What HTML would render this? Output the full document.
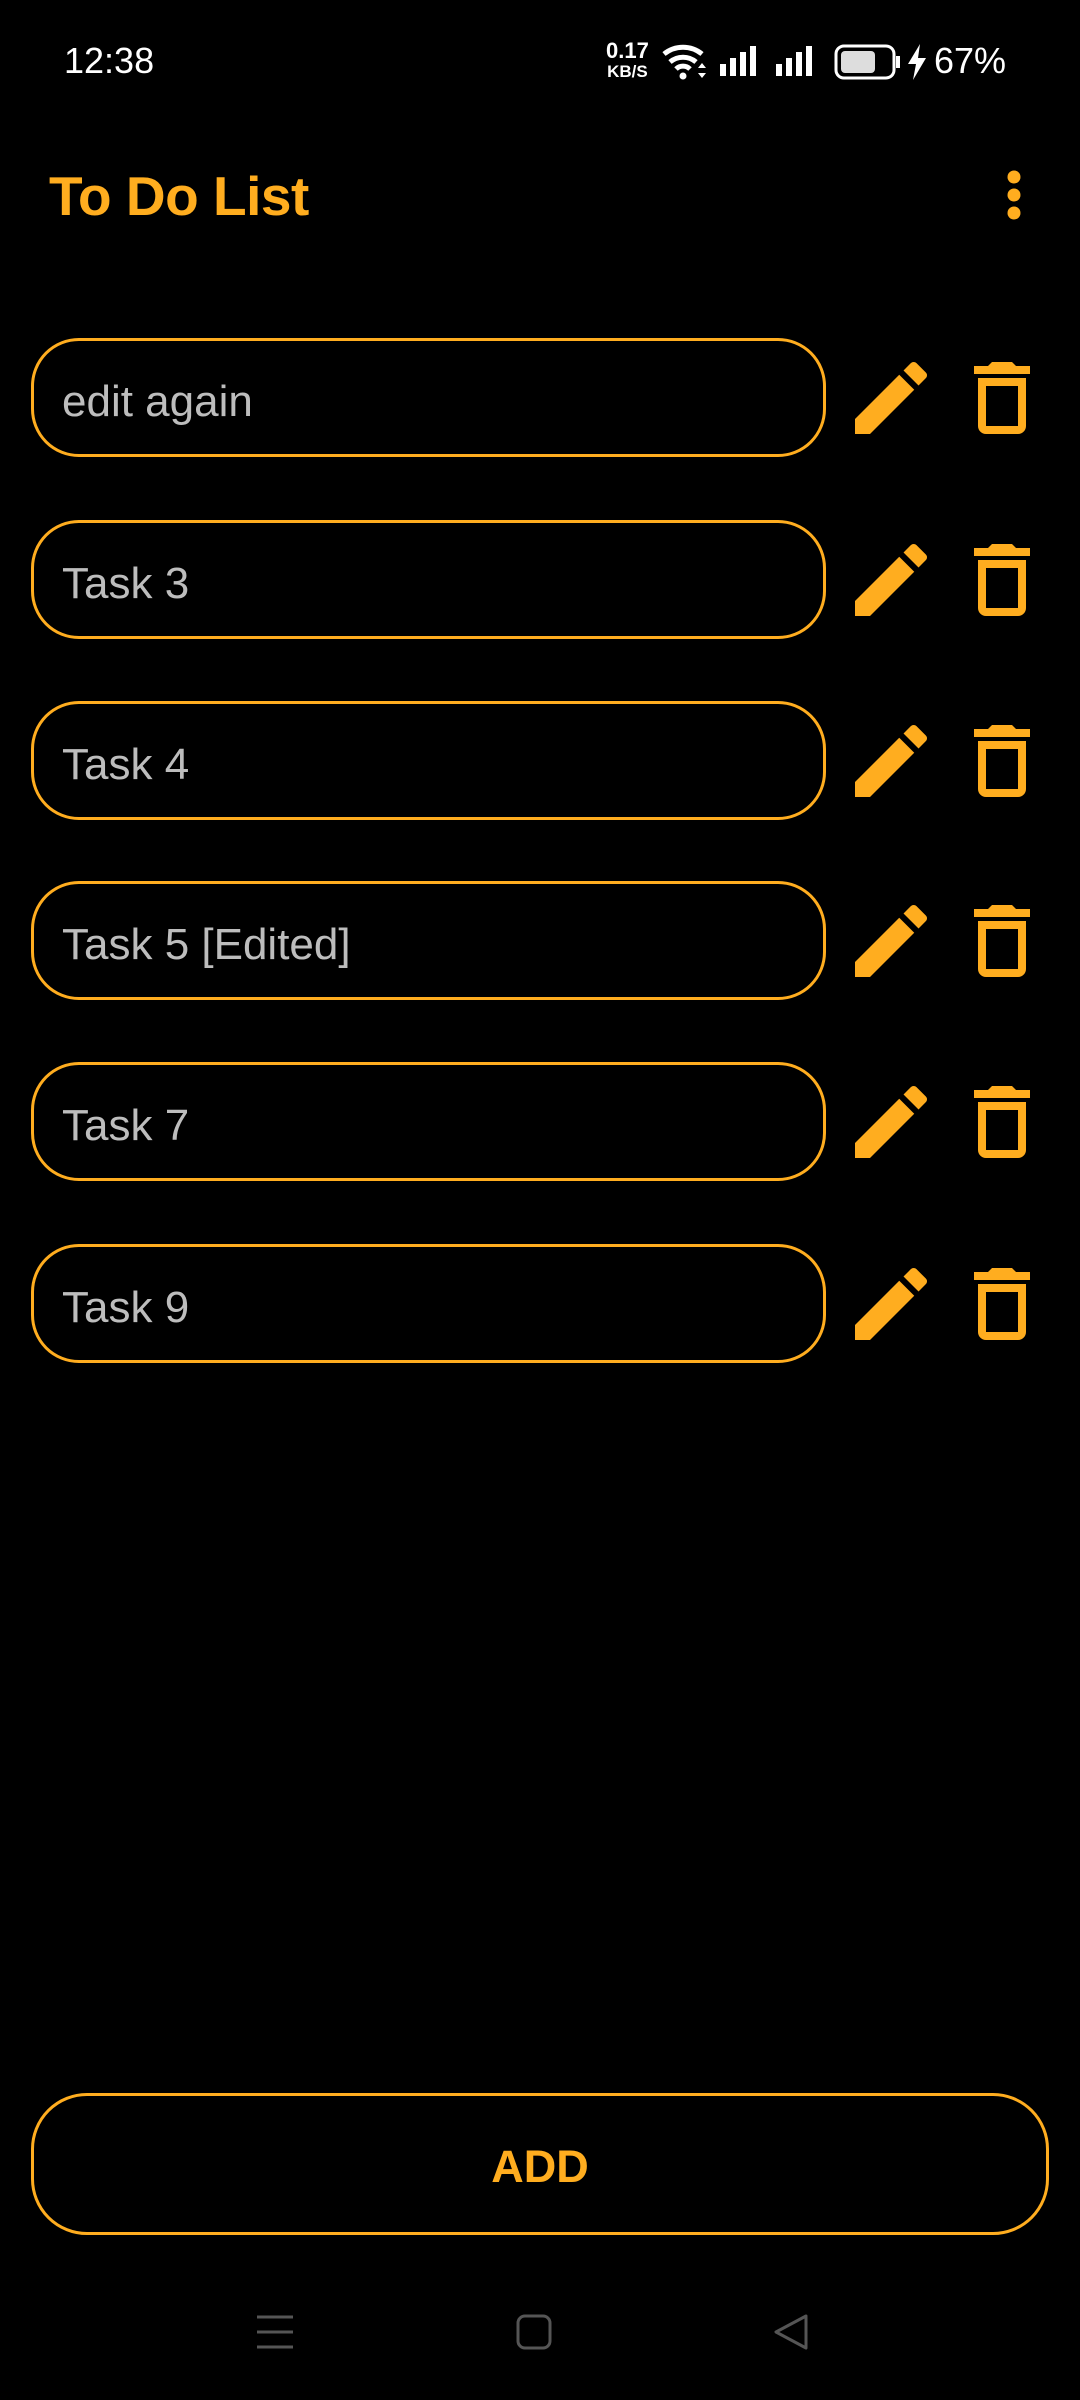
<!DOCTYPE html>
<html><head><meta charset="utf-8"><style>
*{margin:0;padding:0;box-sizing:border-box}
body{width:1080px;height:2400px;background:#000;position:relative;overflow:hidden;font-family:"Liberation Sans",Roboto,sans-serif}
.abs{position:absolute}
.row{position:absolute;left:31px;width:795px;height:119px;border:3px solid #FFAD1F;border-radius:48px}
.row span{position:absolute;left:28px;top:4px;line-height:113px;font-size:44px;color:#bdbdbd}
.ic{position:absolute;width:96px;height:96px}
</style></head><body>
<div class="abs" style="left:64px;top:40px;color:#fff;font-size:36px;">12:38</div>
<div class="abs" style="left:606px;top:41px;color:#fff;font-size:22px;font-weight:bold;line-height:19px;text-align:center;">0.17<br><span style="font-size:17px">KB/S</span></div>
<svg class="abs" style="left:660px;top:40px" width="50" height="42" viewBox="0 0 50 42"><path d="M4 14 A30 30 0 0 1 42 14" stroke="#fff" stroke-width="5" fill="none"/><path d="M10 22 A20 20 0 0 1 36 22" stroke="#fff" stroke-width="5" fill="none"/><path d="M16 29 A10 10 0 0 1 30 29" stroke="#fff" stroke-width="5" fill="none"/><circle cx="23" cy="36" r="3.5" fill="#fff"/><path d="M38 28l4-5 4 5zM38 33l4 5 4-5z" fill="#fff"/></svg>
<svg class="abs" style="left:718px;top:44px" width="110" height="34"><rect x="2" y="20" width="6" height="12" fill="#fff"/><rect x="12" y="14" width="6" height="18" fill="#fff"/><rect x="22" y="8" width="6" height="24" fill="#fff"/><rect x="32" y="2" width="6" height="30" fill="#fff"/><rect x="58" y="20" width="6" height="12" fill="#fff"/><rect x="68" y="14" width="6" height="18" fill="#fff"/><rect x="78" y="8" width="6" height="24" fill="#fff"/><rect x="88" y="2" width="6" height="30" fill="#fff"/></svg>
<svg class="abs" style="left:834px;top:44px" width="70" height="36"><rect x="2" y="2" width="58" height="32" rx="8" stroke="#fff" stroke-width="3" fill="none"/><rect x="7" y="7" width="34" height="22" rx="4" fill="#ddd"/><rect x="62" y="12" width="4" height="12" fill="#fff"/></svg>
<svg class="abs" style="left:906px;top:44px" width="22" height="36"><path d="M14 0L2 20h8l-3 16 13-22h-8z" fill="#fff"/></svg>
<div class="abs" style="left:934px;top:40px;color:#fff;font-size:36px;">67%</div>

<div class="abs" style="left:49px;top:164px;color:#FFAD1F;font-size:55px;font-weight:bold;letter-spacing:-0.5px;">To Do List</div>
<svg class="abs" style="left:1000px;top:168px" width="28" height="54"><circle cx="14" cy="9" r="6.5" fill="#FFAD1F"/><circle cx="14" cy="27" r="6.5" fill="#FFAD1F"/><circle cx="14" cy="45" r="6.5" fill="#FFAD1F"/></svg>

<div class="row" style="top:338px"><span>edit again</span></div>
<div class="row" style="top:520px"><span>Task 3</span></div>
<div class="row" style="top:701px"><span>Task 4</span></div>
<div class="row" style="top:881px"><span>Task 5 [Edited]</span></div>
<div class="row" style="top:1062px"><span>Task 7</span></div>
<div class="row" style="top:1244px"><span>Task 9</span></div>

<svg width="0" height="0" style="position:absolute"><defs>
<path id="pen" d="M3 17.25V21h3.75L17.81 9.94l-3.75-3.75L3 17.25zM20.71 7.04a.996.996 0 0 0 0-1.41l-2.34-2.34a.996.996 0 0 0-1.41 0l-1.830 1.83 3.75 3.75 1.83-1.83z" fill="#FFAD1F"/>
<path id="bin" d="M6 19c0 1.1.9 2 2 2h8c1.1 0 2-.9 2-2V7H6v12zM8 9h8v10H8V9zm7.5-5l-1-1h-5l-1 1H5v2h14V4h-3.5z" fill="#FFAD1F"/>
</defs></svg>
<svg class="ic" style="left:843px;top:350px" viewBox="0 0 24 24"><use href="#pen"/></svg><svg class="ic" style="left:954px;top:350px" viewBox="0 0 24 24"><use href="#bin"/></svg>
<svg class="ic" style="left:843px;top:532px" viewBox="0 0 24 24"><use href="#pen"/></svg><svg class="ic" style="left:954px;top:532px" viewBox="0 0 24 24"><use href="#bin"/></svg>
<svg class="ic" style="left:843px;top:713px" viewBox="0 0 24 24"><use href="#pen"/></svg><svg class="ic" style="left:954px;top:713px" viewBox="0 0 24 24"><use href="#bin"/></svg>
<svg class="ic" style="left:843px;top:893px" viewBox="0 0 24 24"><use href="#pen"/></svg><svg class="ic" style="left:954px;top:893px" viewBox="0 0 24 24"><use href="#bin"/></svg>
<svg class="ic" style="left:843px;top:1074px" viewBox="0 0 24 24"><use href="#pen"/></svg><svg class="ic" style="left:954px;top:1074px" viewBox="0 0 24 24"><use href="#bin"/></svg>
<svg class="ic" style="left:843px;top:1256px" viewBox="0 0 24 24"><use href="#pen"/></svg><svg class="ic" style="left:954px;top:1256px" viewBox="0 0 24 24"><use href="#bin"/></svg>

<div class="abs" style="left:31px;top:2093px;width:1018px;height:142px;border:3px solid #FFAD1F;border-radius:56px;color:#FFAD1F;font-size:45px;font-weight:bold;text-align:center;line-height:142px;">ADD</div>

<svg class="abs" style="left:255px;top:2312px" width="40" height="40"><path d="M2 5h36M2 20h36M2 35h36" stroke="#555" stroke-width="3"/></svg>
<svg class="abs" style="left:515px;top:2313px" width="38" height="38"><rect x="3" y="3" width="32" height="32" rx="7" stroke="#555" stroke-width="3" fill="none"/></svg>
<svg class="abs" style="left:772px;top:2313px" width="38" height="38"><path d="M34 3L4 19l30 16z" stroke="#555" stroke-width="3" fill="none" stroke-linejoin="round"/></svg>
</body></html>
